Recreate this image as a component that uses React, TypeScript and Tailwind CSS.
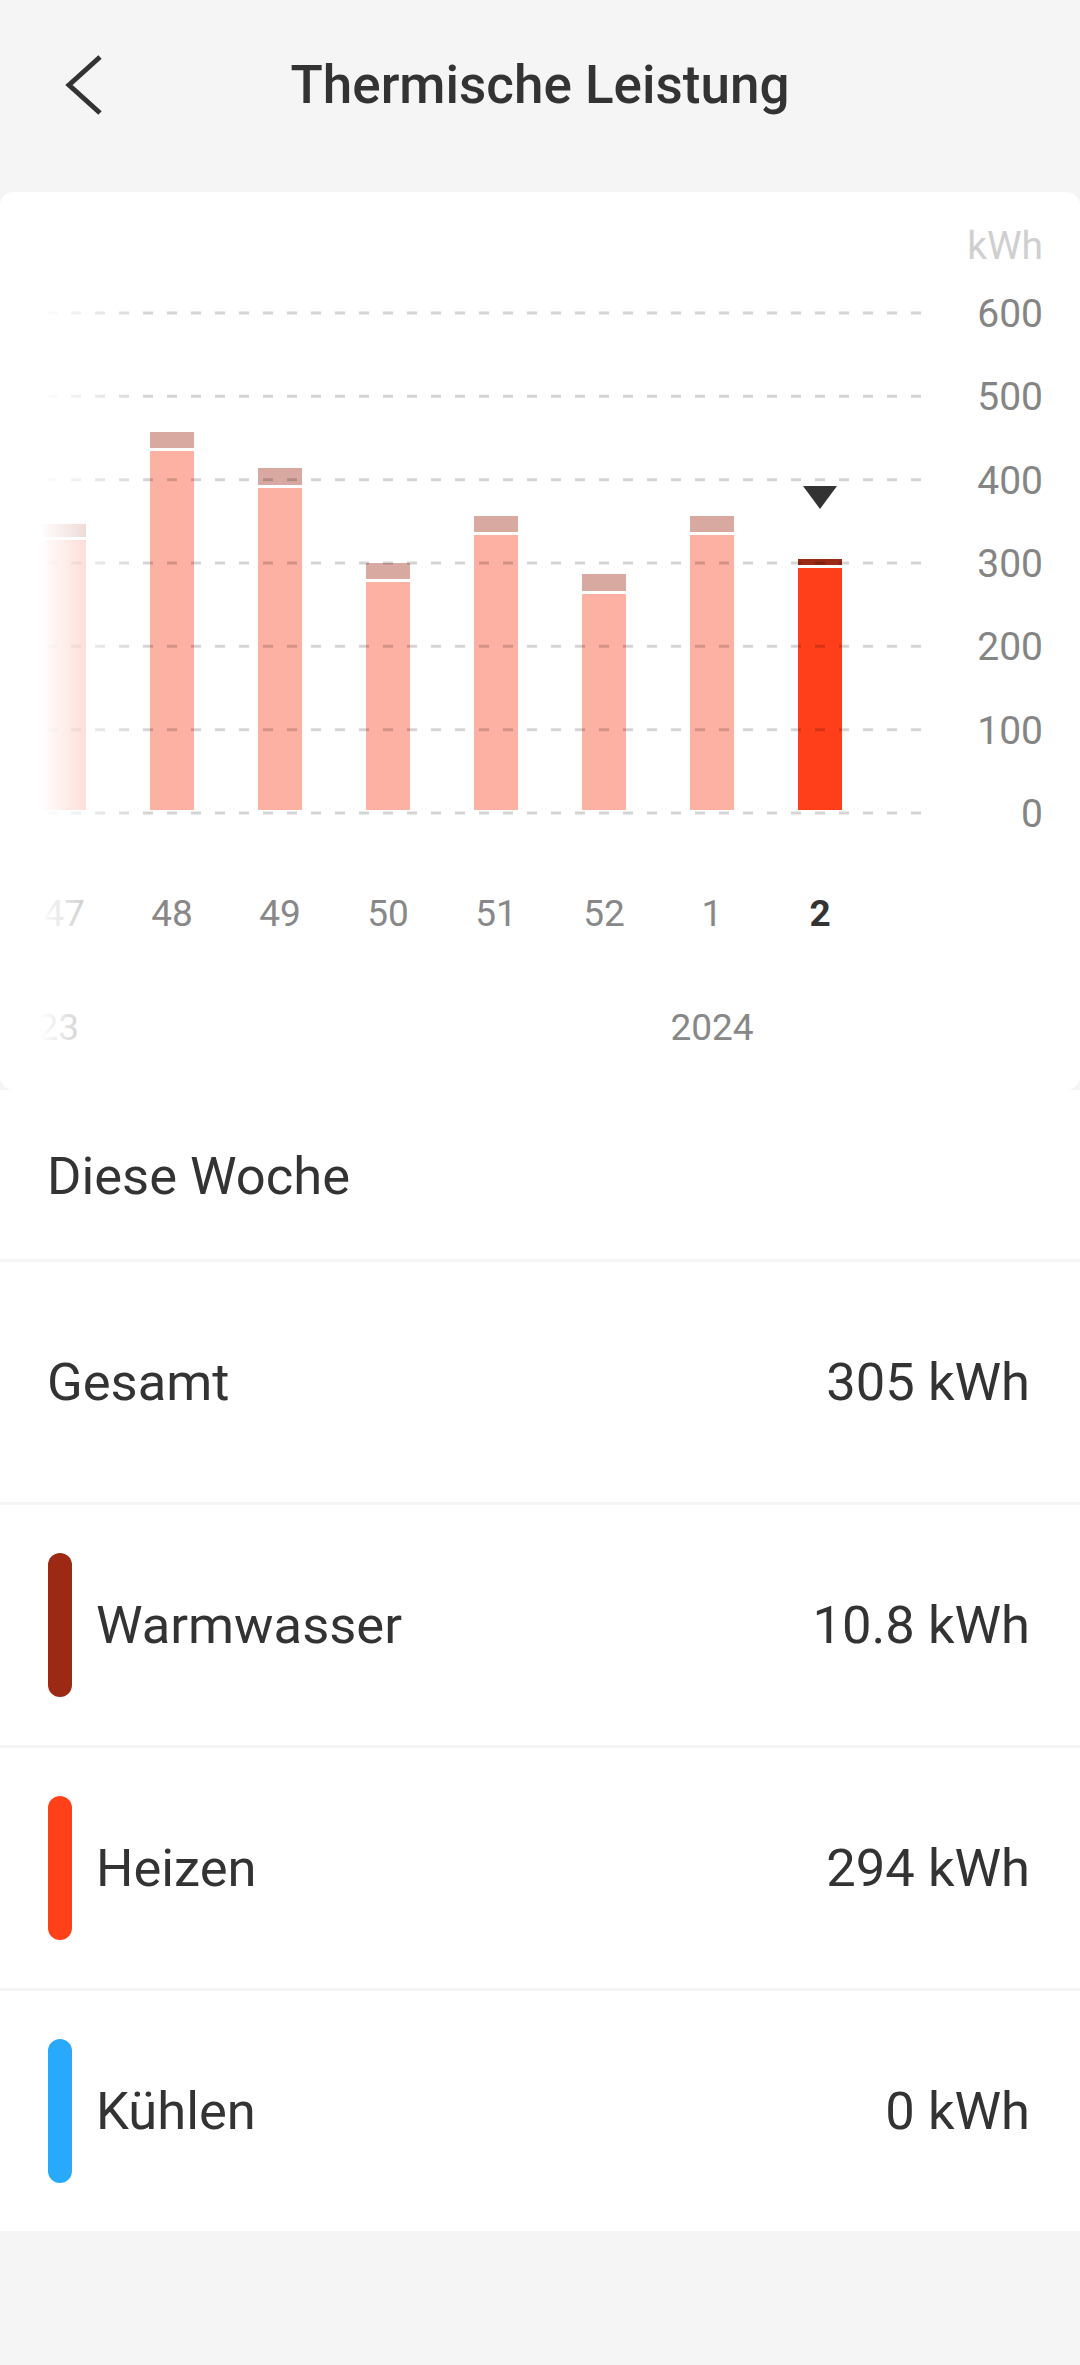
import React from "react";

const bars: { cap: number; capEnd: number; main: number }[] = [
  { cap: 524, capEnd: 537, main: 540 },
  { cap: 432, capEnd: 448, main: 451 },
  { cap: 468, capEnd: 485, main: 488 },
  { cap: 563, capEnd: 579, main: 582 },
  { cap: 516, capEnd: 532, main: 535 },
  { cap: 574, capEnd: 591, main: 594 },
  { cap: 516, capEnd: 532, main: 535 },
  { cap: 559, capEnd: 565, main: 568 },
];
const weeks = ["47", "48", "49", "50", "51", "52", "1", "2"];
const yLabels = ["0", "100", "200", "300", "400", "500", "600"];

function Chart() {
  const bottom = 810;
  return (
    <svg width={1080} height={898} viewBox="0 192 1080 898" className="block">
      <defs>
        <linearGradient id="fade" gradientUnits="userSpaceOnUse" x1="40" y1="0" x2="150" y2="0">
          <stop offset="0" stopColor="#ffffff" stopOpacity="1" />
          <stop offset="1" stopColor="#ffffff" stopOpacity="0" />
        </linearGradient>
      </defs>
      {bars.map((b, i) => {
        const x = 42 + 108 * i;
        const sel = i === bars.length - 1;
        return (
          <g key={i}>
            <rect x={x} y={b.cap} width={44} height={b.capEnd - b.cap} fill={sel ? "#9b2a17" : "#d7a9a1"} />
            <rect x={x} y={b.main} width={44} height={bottom - b.main} fill={sel ? "#ff3f1a" : "#fdb1a2"} />
          </g>
        );
      })}
      {yLabels.map((_, k) => {
        const y = 813 - k * 83.33;
        return (
          <line
            key={k}
            x1={47}
            x2={921}
            y1={y}
            y2={y}
            stroke="rgba(0,0,0,0.17)"
            strokeWidth={3}
            strokeDasharray="10 14"
          />
        );
      })}
      <polygon points="803,486 837,486 820,509" fill="#333333" />
      <text x={1043} y={259} textAnchor="end" fontSize={39} fill="#cfcfcf" fontFamily="Roboto, sans-serif">
        kWh
      </text>
      {yLabels.map((t, k) => (
        <text
          key={t}
          x={1043}
          y={813 - k * 83.33 + 14}
          textAnchor="end"
          fontSize={39}
          fill="#858585"
          fontFamily="Roboto, sans-serif"
        >
          {t}
        </text>
      ))}
      {weeks.map((w, i) => {
        const sel = i === weeks.length - 1;
        return (
          <text
            key={w}
            x={64 + 108 * i}
            y={926}
            textAnchor="middle"
            fontSize={37}
            fill={sel ? "#333333" : "#888888"}
            fontWeight={sel ? 700 : 400}
            fontFamily="Roboto, sans-serif"
          >
            {w}
          </text>
        );
      })}
      <text x={79} y={1040} textAnchor="end" fontSize={37} fill="#888888" fontFamily="Roboto, sans-serif">
        2023
      </text>
      <text x={712} y={1040} textAnchor="middle" fontSize={37} fill="#888888" fontFamily="Roboto, sans-serif">
        2024
      </text>
      <rect x={0} y={192} width={160} height={898} fill="url(#fade)" />
    </svg>
  );
}

function Row({ label, value, color }: { label: string; value: string; color?: string }) {
  return (
    <div className={`h-[240px] bg-white flex items-center justify-between pr-[50px] ${color ? "pl-[48px]" : "pl-[47px]"}`}>
      <div className="flex items-center">
        {color && <div className="w-[24px] h-[144px] rounded-full mr-[24px]" style={{ backgroundColor: color }} />}
        <span className="text-[52.5px] leading-none text-[#333333]">{label}</span>
      </div>
      <span className="text-[52.5px] leading-none text-[#333333]">{value}</span>
    </div>
  );
}

export default function App() {
  return (
    <div className="w-[1080px] min-h-[2365px] bg-[#f5f5f5] font-['Roboto',sans-serif]">
      <header className="h-[170px] grid grid-cols-[1fr_auto_1fr] items-center">
        <div className="pl-[60px] flex items-center">
          <svg width={46} height={68} viewBox="60 50 46 68">
            <polyline points="100,56 69,84 100,112" fill="none" stroke="#333333" strokeWidth={5} strokeLinejoin="miter" />
          </svg>
        </div>
        <h1 className="text-[53px] leading-none font-medium text-[#333333]">Thermische Leistung</h1>
        <div />
      </header>
      <div className="mt-[22px] h-[898px] rounded-[14px] bg-white overflow-hidden">
        <Chart />
      </div>
      <div className="h-[169px] bg-white flex items-center pl-[47px] pt-[4px]">
        <span className="text-[52.5px] leading-none text-[#333333]">Diese Woche</span>
      </div>
      <div className="mt-[3px] flex flex-col gap-[3px]">
        <Row label="Gesamt" value="305 kWh" />
        <Row label="Warmwasser" value="10.8 kWh" color="#9b2914" />
        <Row label="Heizen" value="294 kWh" color="#ff4019" />
        <Row label="Kühlen" value="0 kWh" color="#28a9fb" />
      </div>
    </div>
  );
}
